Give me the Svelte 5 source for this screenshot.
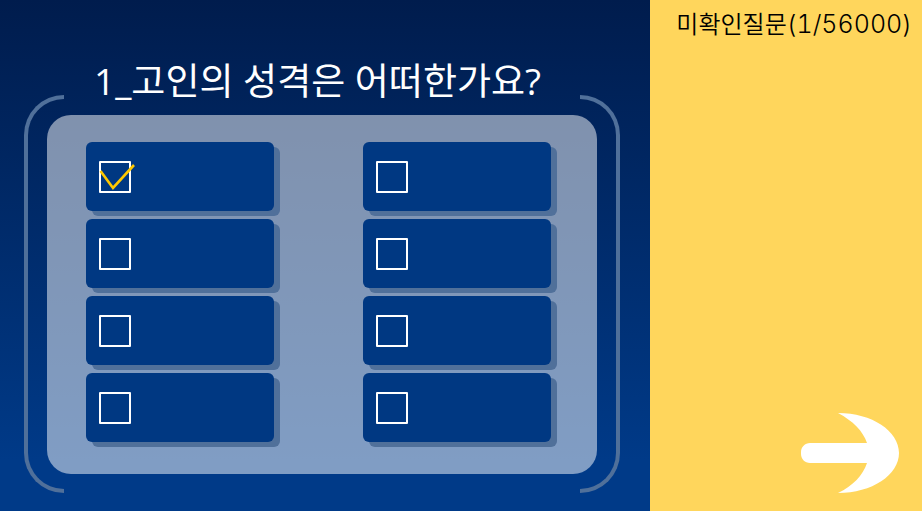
<script>
  let answers = $state([
    { id: 1, checked: true },
    { id: 2, checked: false },
    { id: 3, checked: false },
    { id: 4, checked: false },
    { id: 5, checked: false },
    { id: 6, checked: false },
    { id: 7, checked: false },
    { id: 8, checked: false }
  ]);
</script>

<div class="page">
  <main class="question">
    <h1>1_고인의 성격은 어떠한가요?</h1>
    <div class="frame">
      <div class="panel">
        {#each answers as answer (answer.id)}
          <label class="card">
            <span class="box">
              <input type="checkbox" aria-label={`답변 ${answer.id}`} bind:checked={answer.checked} />
              {#if answer.checked}
                <svg class="tick" viewBox="0 0 36 32" aria-hidden="true">
                  <path d="M1.5 10 L14 27 L35 4" fill="none" stroke="#ffc800" stroke-width="2.6" />
                </svg>
              {/if}
            </span>
          </label>
        {/each}
      </div>
    </div>
  </main>

  <aside class="side">
    <p class="status">미확인질문<span class="count">(1/56000)</span></p>
    <button class="next" type="button" aria-label="다음">
      <svg viewBox="0 0 98 80" aria-hidden="true">
        <path
          fill="#fff"
          d="M37 0 C71 0 98 18 98 40 C98 62 71 80 37 80 C52 73 62 62 66 50 H9 C4 50 0 46 0 41 V39 C0 34 4 30 9 30 H66 C62 18 52 8 37 0 Z"
        />
      </svg>
    </button>
  </aside>
</div>

<style>
  :global(body) {
    margin: 0;
  }

  .page {
    display: grid;
    grid-template-columns: minmax(0, 1fr) 272px;
    min-height: 100vh;
    font-family: "Noto Sans CJK KR", sans-serif;
    font-weight: 350;
  }

  .question {
    box-sizing: border-box;
    display: flex;
    flex-direction: column;
    padding: 65px 30px 18px 24px;
    background: linear-gradient(#001c4d, #003a88 90%);
  }

  h1 {
    height: 30px;
    margin: 0;
    padding-left: 70px;
    font-family: "Open Sans", "Noto Sans CJK KR", sans-serif;
    font-size: 37px;
    font-weight: 400;
    line-height: 32px;
    white-space: nowrap;
    color: #fff;
  }

  .frame {
    position: relative;
    flex: 1;
    display: flex;
    padding: 20px 23px 19px;
  }

  .frame::before,
  .frame::after {
    content: "";
    position: absolute;
    top: 0;
    bottom: 0;
    box-sizing: border-box;
    width: 40px;
    border: 4px solid #50709a;
  }

  .frame::before {
    left: 0;
    border-right: 0;
    border-radius: 40px 0 0 40px;
  }

  .frame::after {
    right: 0;
    border-left: 0;
    border-radius: 0 40px 40px 0;
  }

  .panel {
    flex: 1;
    display: grid;
    grid-template-columns: 1fr 1fr;
    gap: 8px 89px;
    padding: 27px 46px 32px 39px;
    border-radius: 24px;
    background: rgba(255, 255, 255, 0.5);
  }

  .card {
    display: flex;
    align-items: center;
    min-height: 69px;
    padding-left: 13px;
    border-radius: 6px;
    background: #003882;
    box-shadow: 6px 5px 0 #50709a;
  }

  .box {
    position: relative;
    display: flex;
  }

  input {
    appearance: none;
    box-sizing: border-box;
    width: 32px;
    height: 32px;
    margin: 0;
    border: 2px solid #fff;
    border-radius: 1px;
  }

  .tick {
    position: absolute;
    top: 0;
    left: 0;
    width: 36px;
    height: 32px;
    pointer-events: none;
  }

  .side {
    display: flex;
    flex-direction: column;
    justify-content: space-between;
    align-items: flex-end;
    padding: 8px 10px 18px;
    background: #ffd65c;
  }

  .status {
    margin: 0;
    font-size: 24px;
    line-height: 30px;
    white-space: nowrap;
    color: #000;
  }

  .count {
    font-family: Inter, sans-serif;
    font-weight: 300;
    font-size: 25px;
    font-variant-numeric: tabular-nums;
  }

  .next {
    display: flex;
    margin-right: 13px;
    padding: 0;
    border: 0;
    background: none;
    cursor: pointer;
  }

  .next svg {
    width: 98px;
    height: 80px;
  }
</style>
